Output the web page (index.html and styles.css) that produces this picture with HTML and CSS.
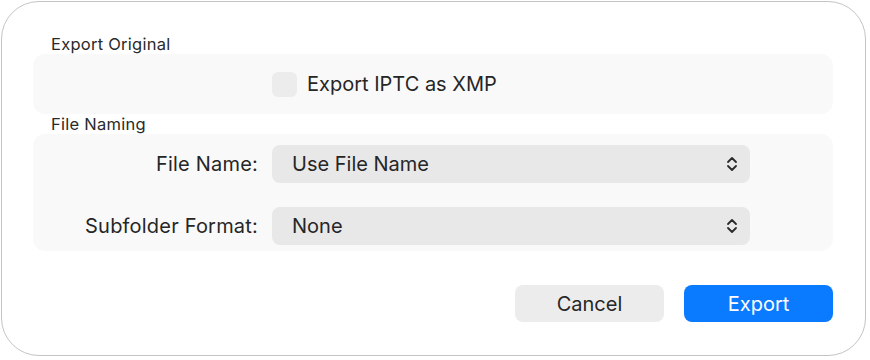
FILE: index.html
```html
<!DOCTYPE html>
<html>
<head>
<meta charset="utf-8">
<link rel="stylesheet" href="styles.css">
</head>
<body>
<div class="dialog">
  <div class="section-title first">Export Original</div>
  <div class="box box-check">
    <div class="check-row">
      <span class="checkbox"></span>
      <span class="check-label">Export IPTC as XMP</span>
    </div>
  </div>
  <div class="section-title">File Naming</div>
  <div class="box box-form">
    <div class="row">
      <span class="label">File Name:</span>
      <div class="popup"><span>Use File Name</span>
        <svg class="chev" width="12" height="16" viewBox="0 0 12 16"><path d="M2 6 L6 2 L10 6 M2 10 L6 14 L10 10" fill="none" stroke="#2a2a2a" stroke-width="1.8" stroke-linecap="round" stroke-linejoin="round"/></svg>
      </div>
    </div>
    <div class="row">
      <span class="label">Subfolder Format:</span>
      <div class="popup"><span>None</span>
        <svg class="chev" width="12" height="16" viewBox="0 0 12 16"><path d="M2 6 L6 2 L10 6 M2 10 L6 14 L10 10" fill="none" stroke="#2a2a2a" stroke-width="1.8" stroke-linecap="round" stroke-linejoin="round"/></svg>
      </div>
    </div>
  </div>
  <div class="buttons">
    <button class="btn cancel">Cancel</button>
    <button class="btn primary">Export</button>
  </div>
</div>
</body>
</html>
```

FILE: styles.css
```css
html, body {
  margin: 0;
  padding: 0;
  background: #ffffff;
}
body {
  font-family: Inter, "Noto Sans", sans-serif;
  color: #262626;
  padding: 1px;
}
.dialog {
  width: 865px;
  height: 355px;
  box-sizing: border-box;
  border: 1px solid #c4c4c4;
  border-radius: 38px;
  background: #ffffff;
  padding: 33px 31px 0 31px;
}
.section-title {
  font-size: 16.5px;
  line-height: 19px;
  padding-left: 18px;
  color: #2a2a2a;
  letter-spacing: 0.25px;
}
.box {
  background: #f9f9f9;
  border-radius: 12px;
  width: 800px;
  box-sizing: border-box;
}
.box-check {
  height: 60px;
  display: flex;
  align-items: center;
  padding-left: 239px;
  margin-bottom: 1px;
}
.check-row {
  display: flex;
  align-items: center;
  gap: 10px;
}
.checkbox {
  width: 25px;
  height: 25px;
  border-radius: 6px;
  background: #ececec;
  display: inline-block;
}
.check-label {
  font-size: 20px;
  color: #262626;
}
.box-form {
  height: 117px;
  padding: 11px 0 0 0;
  display: flex;
  flex-direction: column;
  gap: 24px;
}
.row {
  display: flex;
  align-items: center;
}
.label {
  width: 225px;
  text-align: right;
  font-size: 20px;
  margin-right: 14px;
  letter-spacing: 0.2px;
}
.popup {
  width: 478px;
  height: 38px;
  background: #e8e8e8;
  border-radius: 8px;
  display: flex;
  align-items: center;
  justify-content: space-between;
  padding: 0 12px 0 20px;
  box-sizing: border-box;
  font-size: 20px;
}
.chev {
  display: block;
}
.buttons {
  display: flex;
  justify-content: flex-end;
  gap: 20px;
  margin-top: 34px;
  width: 800px;
}
.btn {
  width: 149px;
  height: 37px;
  border: none;
  border-radius: 8px;
  font-family: Inter, "Noto Sans", sans-serif;
  font-size: 20px;
  padding: 0;
}
.cancel {
  background: #ececec;
  color: #262626;
}
.primary {
  background: #0a7aff;
  color: #ffffff;
}
```
